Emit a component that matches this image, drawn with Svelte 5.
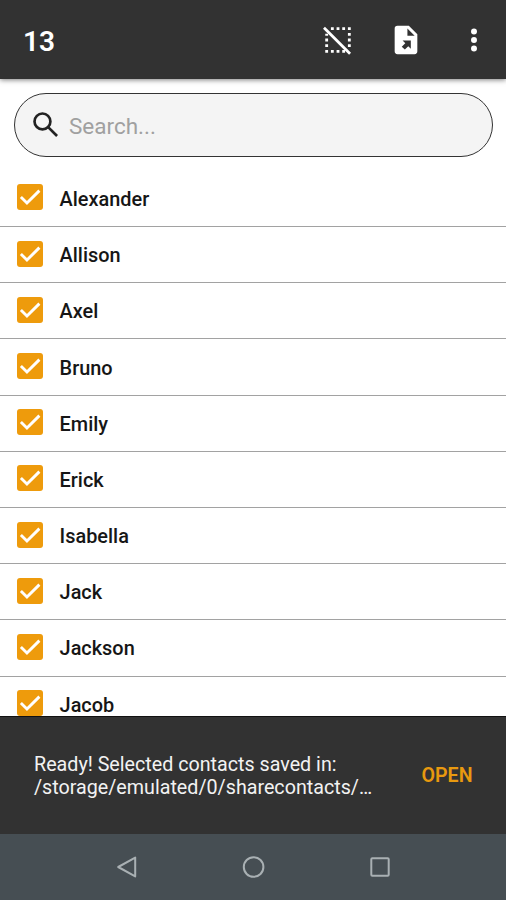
<script lang="ts">
    interface Contact {
        name: string,
        checked: boolean
    }

    let contacts: Contact[] = [
        "Alexander",
        "Allison",
        "Axel",
        "Bruno",
        "Emily",
        "Erick",
        "Isabella",
        "Jack",
        "Jackson",
        "Jacob"
    ].map((name) => ({name, checked: true}));

    // contacts further down the list that are selected too
    let selectedBelow = 3;
    let search = "";

    $: selectedCount = contacts.filter((x) => x.checked).length + selectedBelow;
    $: visible = contacts.filter((x) => x.name.toLowerCase().includes(search.toLowerCase()));

    function toggle(contact: Contact){
        contact.checked = !contact.checked;
        contacts = contacts;
    }
    function deselectAll(){
        contacts.forEach((x) => {x.checked = false})
        selectedBelow = 0;
        contacts = contacts;
    }
</script>

<div class="screen">
    <header class="toolbar">
        <div class="count">{selectedCount}</div>
        <button class="icon" aria-label="Deselect all" on:click={deselectAll}>
            <svg viewBox="0 0 24 24">
                <path d="M7 3h2v2H7zM11 3h2v2h-2zM15 3h2v2h-2zM19 3h2v2h-2zM19 7h2v2h-2zM19 11h2v2h-2zM19 15h2v2h-2zM3 7.5h2v1.5H3zM3 11h2v2H3zM3 15h2v2H3zM3 19h2v2H3zM7 19h2v2H7zM11 19h2v2h-2zM15 19h2v2h-2z"/>
                <path d="M2.8 2.6 1.4 4 19.8 22.4 21.2 21z"/>
            </svg>
        </button>
        <button class="icon" aria-label="Export">
            <svg viewBox="0 0 24 24">
                <path fill-rule="evenodd" d="M14 2H6a2 2 0 0 0-2 2v16a2 2 0 0 0 2 2h12a2 2 0 0 0 2-2V8zM13 3.9V9h5.1zM9.6 12.4h5.8v5.8l-1.8-1.8-2.4 2.3-1-.8-1.2-1.2 2.5-2.4z"/>
            </svg>
        </button>
        <button class="icon" aria-label="More options">
            <svg viewBox="0 0 24 24">
                <circle cx="12" cy="6" r="2.1"/>
                <circle cx="12" cy="12" r="2.1"/>
                <circle cx="12" cy="18" r="2.1"/>
            </svg>
        </button>
    </header>

    <main>
        <label class="search">
            <svg viewBox="0 0 24 24">
                <circle cx="9.5" cy="9.5" r="5.6"/>
                <path d="M13.7 13.7 19.8 19.8"/>
            </svg>
            <input type="text" placeholder="Search..." bind:value={search}/>
        </label>
        <div class="list">
            {#each visible as contact}
                <label class="row">
                    <input type="checkbox" checked={contact.checked} on:change={() => toggle(contact)}/>
                    <span class="box" class:checked={contact.checked}>
                        {#if contact.checked}
                            <svg viewBox="0 0 18 18"><path d="M2.7 9 6.9 13.2 15.5 4.6"/></svg>
                        {/if}
                    </span>
                    <span class="name">{contact.name}</span>
                </label>
            {/each}
        </div>
    </main>

    <div class="snackbar">
        <div class="message">
            <div>Ready! Selected contacts saved in:</div>
            <div>/storage/emulated/0/sharecontacts/…</div>
        </div>
        <button class="open">OPEN</button>
    </div>

    <nav>
        <svg viewBox="0 0 24 24"><path d="M21.2 2.6V21.4L4.2 12z"/></svg>
        <svg viewBox="0 0 24 24"><circle cx="12.6" cy="12" r="9.8"/></svg>
        <svg viewBox="0 0 24 24"><rect x="3.3" y="3.3" width="17.4" height="17.4" rx="1"/></svg>
    </nav>
</div>

<style>
    :global(body) {
        margin: 0;
        overflow: hidden;
    }
    .screen {
        width: 506px;
        height: 900px;
        display: flex;
        flex-direction: column;
        overflow: hidden;
        background: #fff;
        font-family: Roboto, "Liberation Sans", sans-serif;
    }
    button {
        padding: 0;
        border: 0;
        background: none;
        font: inherit;
        cursor: pointer;
    }
    .toolbar {
        flex: none;
        height: 79px;
        box-sizing: border-box;
        padding: 1px 15.5px 0 23px;
        display: flex;
        align-items: center;
        background: #323232;
        box-shadow: 0 1px 5px rgba(0, 0, 0, 0.5);
        z-index: 1;
    }
    .count {
        flex: 1;
        padding-top: 2px;
        color: #fff;
        font-size: 28px;
        font-weight: 600;
    }
    .icon {
        width: 34px;
        height: 34px;
        margin-left: 33.6px;
    }
    .icon svg {
        display: block;
        width: 34px;
        height: 34px;
        fill: #fff;
    }
    main {
        flex: 1;
        min-height: 0;
        overflow: hidden;
    }
    .search {
        height: 64px;
        box-sizing: border-box;
        margin: 14px 13px 13.9px 14px;
        padding-left: 14px;
        display: flex;
        align-items: center;
        border: 1.4px solid #333;
        border-radius: 32px;
        background: #f4f4f4;
    }
    .search svg {
        width: 34px;
        height: 34px;
        margin-top: -1px;
        fill: none;
        stroke: #222;
        stroke-width: 1.9;
    }
    .search input {
        flex: 1;
        min-width: 0;
        margin-left: 6px;
        padding: 1px 0 0;
        border: 0;
        outline: 0;
        background: none;
        font: 22.5px Roboto, "Liberation Sans", sans-serif;
    }
    .search input::placeholder {
        color: #a0a0a0;
    }
    .row {
        height: 56.2px;
        box-sizing: border-box;
        padding-left: 17px;
        display: flex;
        align-items: center;
        border-bottom: 1.4px solid #a2a2a2;
    }
    .row input {
        display: none;
    }
    .box {
        width: 26px;
        height: 26px;
        margin-bottom: 2px;
        box-sizing: border-box;
        border: 3px solid #757575;
        border-radius: 3px;
    }
    .box.checked {
        border: 0;
        background: #ee9b0c;
    }
    .box svg {
        display: block;
        width: 26px;
        height: 26px;
        fill: none;
        stroke: #fff;
        stroke-width: 2;
    }
    .name {
        margin-left: 16.6px;
        padding-top: 2px;
        color: #161616;
        font-size: 19.9px;
        font-weight: 550;
    }
    .snackbar {
        flex: none;
        height: 118px;
        box-sizing: border-box;
        padding: 0 33.5px 0 34px;
        display: flex;
        align-items: center;
        justify-content: space-between;
        border-top: 1px solid #111;
        background: #323232;
    }
    .message {
        color: #f2f2f2;
        font-size: 19.7px;
        line-height: 23px;
        white-space: nowrap;
    }
    .open {
        color: #e8990f;
        font-size: 19.6px;
        font-weight: 600;
    }
    nav {
        flex: none;
        height: 66px;
        box-sizing: border-box;
        padding: 0 63px;
        display: flex;
        align-items: center;
        justify-content: space-around;
        background: #464e53;
    }
    nav svg {
        width: 24px;
        height: 24px;
        fill: none;
        stroke: #a9b0b3;
        stroke-width: 2;
        stroke-linejoin: round;
    }
</style>
